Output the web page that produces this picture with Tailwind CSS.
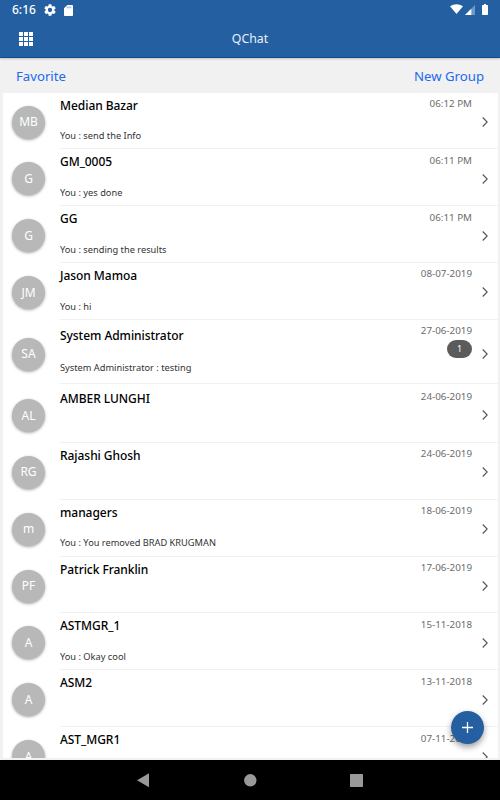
<!DOCTYPE html>
<html lang="en">
<head>
<meta charset="utf-8">
<title>QChat</title>
<script src="https://cdn.jsdelivr.net/npm/@tailwindcss/browser@4"></script>
</head>
<body class="w-[500px] h-[800px] overflow-hidden bg-black font-['Noto_Sans',sans-serif]">
<div class="relative flex flex-col w-[500px] h-[800px] overflow-hidden">
  <header class="relative z-10 h-[58px] shrink-0 bg-[#245fa1] text-white border-b border-[#0c4c91] shadow-[0_1px_2px_rgba(0,0,0,0.2)]">
    <div class="flex h-5 items-center pl-3 pr-[11px]">
      <span class="w-[32px] text-[12px] leading-5 font-medium whitespace-nowrap">6:16</span>
      <svg class="w-3 h-3 shrink-0" viewBox="2 2 20 20" fill="currentColor"><path d="M19.14 12.94a7.5 7.5 0 0 0 0-1.88l2.03-1.58a.5.5 0 0 0 .12-.61l-1.92-3.32a.5.5 0 0 0-.59-.22l-2.39.96a7 7 0 0 0-1.62-.94l-.36-2.54a.5.5 0 0 0-.48-.41h-3.84a.5.5 0 0 0-.47.41l-.36 2.54a7 7 0 0 0-1.62.94l-2.39-.96a.5.5 0 0 0-.59.22L2.74 8.87a.5.5 0 0 0 .12.61l2.03 1.58a7.5 7.5 0 0 0 0 1.88l-2.03 1.58a.5.5 0 0 0-.12.61l1.92 3.32a.5.5 0 0 0 .59.22l2.39-.96a7 7 0 0 0 1.62.94l.36 2.54a.5.5 0 0 0 .48.41h3.84a.5.5 0 0 0 .47-.41l.36-2.54a7 7 0 0 0 1.62-.94l2.39.96a.5.5 0 0 0 .59-.22l1.92-3.32a.5.5 0 0 0-.12-.61zM12 15.6a3.6 3.6 0 1 1 0-7.2 3.6 3.6 0 0 1 0 7.2z"/></svg>
      <svg class="ml-2 w-[9px] h-[11px] shrink-0" viewBox="4 2 16 20" preserveAspectRatio="none" fill="currentColor"><path d="M18 2h-8L4 8v12c0 1.1.9 2 2 2h12c1.1 0 2-.9 2-2V4c0-1.1-.9-2-2-2z"/><path fill="#245fa1" fill-opacity=".55" d="M9 4.5h1.8V8H9zM12 4.5h1.8V8H12zM15 4.5h1.8V8H15z"/></svg>
      <div class="ml-auto flex h-5 items-center pb-[2px]">
        <svg class="w-[13px] h-[10px]" viewBox="0 0 13 10" fill="currentColor"><path d="M0 2.3Q6.5-2 13 2.3L6.5 10z"/></svg>
        <svg class="ml-[2px] mt-[1px] w-[10px] h-[10px]" viewBox="0 0 10 10"><path fill="#6f98c5" d="M10 0V10H0z"/><path fill="#fff" d="M6.3 3.7V10H0z"/></svg>
        <svg class="ml-[7px] mr-[1px] w-[6px] h-[11px]" viewBox="0 0 6 11" fill="currentColor"><path d="M2 0h2v1h1.3q.7 0 .7.7v8.6q0 .7-.7.7H.7Q0 11 0 10.3V1.7Q0 1 .7 1H2z"/></svg>
      </div>
    </div>
    <div class="relative flex h-[37px] items-center justify-center">
      <svg class="absolute left-[19px] top-3 w-[14px] h-[14px]" viewBox="0 0 14 14" fill="currentColor"><path d="M0 0h4v4H0zM5 0h4v4H5zM10 0h4v4h-4zM0 5h4v4H0zM5 5h4v4H5zM10 5h4v4h-4zM0 10h4v4H0zM5 10h4v4H5zM10 10h4v4h-4z"/></svg>
      <h1 class="text-[12.3px] leading-5 text-[#eaf1f9]">QChat</h1>
    </div>
  </header>
  <nav class="flex h-[34.5px] shrink-0 items-center justify-between bg-[#f1f1f1] px-4 pt-[3px] text-[13.2px] text-[#2169f0]">
    <a>Favorite</a><a>New Group</a>
  </nav>
  <main class="h-[667.5px] shrink-0 overflow-hidden bg-[#f1f1f1] px-[2.5px] pb-[2.5px]">
    <ul id="chats" class="h-full overflow-hidden bg-white"></ul>
  </main>
  <button class="absolute left-[451px] top-[711px] flex size-[33px] items-center justify-center rounded-full bg-[#245fa1] shadow-[0_3px_6px_rgba(0,0,0,0.4)]">
    <svg class="size-[11px]" viewBox="0 0 11 11" stroke="#fff" stroke-width="1.3"><path d="M5.5 0v11M0 5.5h11"/></svg>
  </button>
  <footer class="relative h-10 shrink-0 bg-black">
    <svg class="block w-full h-full" viewBox="0 0 500 40" fill="#999"><path d="M137 20.3l12-7v14z"/><circle cx="250.3" cy="20.3" r="6.2"/><rect x="350" y="14" width="13" height="13" rx=".7"/></svg>
  </footer>
</div>
<script>
const chats = [
  ['MB','Median Bazar','You : send the Info','06:12 PM'],
  ['G','GM_0005','You : yes done','06:11 PM'],
  ['G','GG','You : sending the results','06:11 PM'],
  ['JM','Jason Mamoa','You : hi','08-07-2019'],
  ['SA','System Administrator','System Administrator : testing','27-06-2019','1'],
  ['AL','AMBER LUNGHI','','24-06-2019'],
  ['RG','Rajashi Ghosh','','24-06-2019'],
  ['m','managers','You : You removed BRAD KRUGMAN','18-06-2019'],
  ['PF','Patrick Franklin','','17-06-2019'],
  ['A','ASTMGR_1','You : Okay cool','15-11-2018'],
  ['A','ASM2','','13-11-2018'],
  ['A','AST_MGR1','','07-11-2018'],
];
const sizes = {
  SA: ['h-[63.8px]', 'pt-[6px]', 'pt-[2.3px]', 'pt-[17.8px]', 'mt-[13.8px]'],
  AL: ['h-[58.9px]', 'pt-[5px]', 'pt-[4.3px]', 'pt-[15.3px]', 'mt-[12.5px]'],
};
const base = ['h-[56.9px]', 'pt-[3px]', 'pt-[2.3px]', 'pt-[13px]', 'mt-[12.5px]'];
document.getElementById('chats').innerHTML = chats.map(([initials, name, text, date, count]) => {
  const [row, body, meta, icon, gap] = sizes[initials] || base;
  return `<li class="flex ${row} pl-[9.5px]">
    <div class="${icon} w-[48px] shrink-0"><div class="flex size-[33px] items-center justify-center rounded-full bg-[#b8b8b8] text-[12px] text-white shadow-[0_1px_3px_rgba(0,0,0,0.35)]">${initials}</div></div>
    <div class="flex flex-1 border-b border-[#f1f1f1]">
      <div class="${body} flex-1 whitespace-nowrap text-black">
        <div class="text-[12px] leading-5 font-medium tracking-[-0.05px]">${name}</div>
        <div class="${gap} text-[9.25px] leading-4 text-[#333]">${text}</div>
      </div>
      <div class="${meta} flex flex-col items-end text-[9.8px] leading-[18px] text-[#6b6b6b]">
        <span>${date}</span>
        ${count ? `<span class="flex h-[18px] w-[25px] items-center justify-center rounded-full bg-[#5b5b5b] text-[9px] text-white">${count}</span>` : ''}
      </div>
      <div class="${icon} w-[25.5px] shrink-0"><svg class="ml-[9.8px] mt-[11.3px] w-[6px] h-[10px]" viewBox="0 0 6 10" fill="none" stroke="#555" stroke-width="1.1"><path d="M.7.5L5.2 5L.7 9.5"/></svg></div>
    </div>
  </li>`;
}).join('');
</script>
</body>
</html>
